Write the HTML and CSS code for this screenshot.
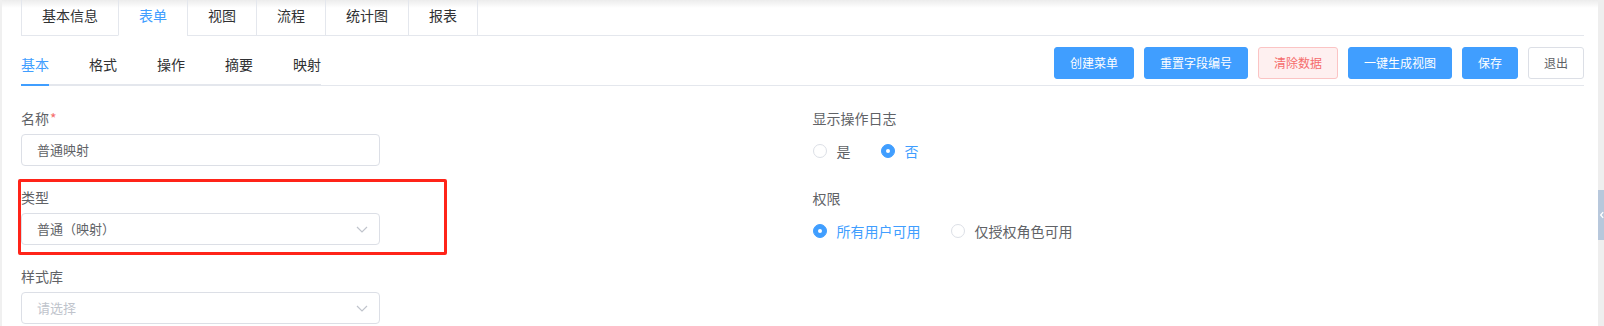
FILE: index.html
```html
<!DOCTYPE html>
<html lang="zh-CN">
<head>
<meta charset="utf-8">
<title>表单设置</title>
<link rel="stylesheet" href="styles.css">
</head>
<body>
<div class="page">
  <div class="edge-left"></div>
  <main class="main">
    <div class="card-tabs">
      <div class="card-tab">基本信息</div>
      <div class="card-tab is-active">表单</div>
      <div class="card-tab">视图</div>
      <div class="card-tab">流程</div>
      <div class="card-tab">统计图</div>
      <div class="card-tab is-last">报表</div>
      <div class="card-fill"></div>
    </div>

    <div class="toolbar">
      <nav class="subtabs">
        <div class="subtab is-active"><span>基本</span></div>
        <div class="subtab"><span>格式</span></div>
        <div class="subtab"><span>操作</span></div>
        <div class="subtab"><span>摘要</span></div>
        <div class="subtab is-last"><span>映射</span></div>
      </nav>
      <div class="actions">
        <button class="btn btn-primary" type="button">创建菜单</button>
        <button class="btn btn-primary" type="button">重置字段编号</button>
        <button class="btn btn-danger-plain" type="button">清除数据</button>
        <button class="btn btn-primary" type="button">一键生成视图</button>
        <button class="btn btn-primary" type="button">保存</button>
        <button class="btn btn-default" type="button">退出</button>
      </div>
    </div>

    <form class="form">
      <div class="col">
        <div class="item">
          <div class="label">名称<span class="req">*</span></div>
          <div class="input"><span class="value">普通映射</span></div>
        </div>
        <div class="item is-marked">
          <div class="label">类型</div>
          <div class="input select">
            <span class="value">普通（映射）</span>
            <svg class="chevron" width="12" height="7" viewBox="0 0 12 7"><path d="M1 1 L6 6 L11 1" fill="none" stroke="#c0c4cc" stroke-width="1.2"/></svg>
          </div>
          <div class="highlight"></div>
        </div>
        <div class="item">
          <div class="label">样式库</div>
          <div class="input select">
            <span class="value placeholder">请选择</span>
            <svg class="chevron" width="12" height="7" viewBox="0 0 12 7"><path d="M1 1 L6 6 L11 1" fill="none" stroke="#c0c4cc" stroke-width="1.2"/></svg>
          </div>
        </div>
      </div>
      <div class="col">
        <div class="item">
          <div class="label label-radio">显示操作日志</div>
          <div class="radio-group">
            <label class="radio"><span class="dot"></span><span class="radio-text">是</span></label>
            <label class="radio is-checked"><span class="dot"></span><span class="radio-text">否</span></label>
          </div>
        </div>
        <div class="item">
          <div class="label label-radio">权限</div>
          <div class="radio-group">
            <label class="radio is-checked"><span class="dot"></span><span class="radio-text">所有用户可用</span></label>
            <label class="radio"><span class="dot"></span><span class="radio-text">仅授权角色可用</span></label>
          </div>
        </div>
      </div>
    </form>
  </main>
  <div class="edge-right">
    <div class="collapse-handle">
      <svg width="6" height="10" viewBox="0 0 6 10"><path d="M5 1.5 L2 5 L5 8.5" fill="none" stroke="#ffffff" stroke-width="1.6"/></svg>
    </div>
  </div>
</div>
</body>
</html>
```
FILE: styles.css
```css
* { box-sizing: border-box; }

html, body {
  margin: 0;
  height: 100%;
  overflow: hidden;
  background: #fff;
}

body {
  font-family: "Noto Sans CJK SC", "Liberation Sans", sans-serif;
  font-size: 14px;
  color: #606266;
}

.page {
  display: flex;
  height: 100%;
}

.edge-left {
  width: 2px;
  flex: none;
  background: #f0f0f0;
}

.edge-right {
  width: 6px;
  flex: none;
  background: #eeeeee;
  position: relative;
}

.collapse-handle {
  position: absolute;
  top: 190px;
  right: 0;
  width: 6px;
  height: 50px;
  background: #b8c8dc;
  display: flex;
  align-items: center;
  padding-left: 1px;
}

.collapse-handle svg { display: block; }

.main {
  flex: 1;
  min-width: 0;
  padding: 0 14px 0 19px;
  background: linear-gradient(to bottom, #ececec 0, #ffffff 8px) no-repeat;
}

/* top card tabs */
.card-tabs {
  display: flex;
  margin-top: -5px;
}

.card-tab {
  height: 41px;
  line-height: 40px;
  padding: 0 20px;
  font-size: 14px;
  color: #303133;
  border-left: 1px solid #e4e7ed;
  border-bottom: 1px solid #e4e7ed;
}

.card-tab.is-active {
  color: #409eff;
  border-bottom-color: transparent;
}

.card-tab.is-last {
  border-right: 1px solid #e4e7ed;
}

.card-fill {
  flex: 1;
  border-bottom: 1px solid #e4e7ed;
}

/* toolbar with sub tabs and buttons */
.toolbar {
  display: flex;
  align-items: flex-start;
  padding-top: 8px;
  border-bottom: 1px solid #e4e7ed;
}

.subtabs {
  display: flex;
  border-bottom: 2px solid #e4e7ed;
  margin-bottom: -1px;
}

.subtab {
  height: 40px;
  padding: 0 20px;
  font-size: 14px;
  color: #303133;
}

.subtab:first-child { padding-left: 0; }
.subtab.is-last { padding-right: 0; }

.subtab span {
  display: block;
  height: 40px;
  line-height: 40px;
}

.subtab.is-active span {
  color: #409eff;
  box-shadow: 0 2px 0 #409eff;
}

.actions {
  margin-left: auto;
  margin-top: 3px;
  display: flex;
  gap: 10px;
}

.btn {
  height: 32px;
  padding: 0 15px;
  font-family: inherit;
  font-size: 12px;
  line-height: 30px;
  border-radius: 3px;
  border: 1px solid #dcdfe6;
  background: #fff;
  color: #606266;
  cursor: pointer;
  white-space: nowrap;
}

.btn-primary {
  background: #409eff;
  border-color: #409eff;
  color: #fff;
}

.btn-danger-plain {
  background: #fef0f0;
  border-color: #fbc4c4;
  color: #f56c6c;
}

/* form */
.form {
  display: grid;
  grid-template-columns: 1fr 1fr;
  column-gap: 20px;
  padding-top: 22px;
  margin: 0;
}

.item {
  margin-bottom: 21px;
}

.item.is-marked {
  position: relative;
}

.label {
  font-size: 14px;
  line-height: 20px;
  height: 20px;
  color: #606266;
  margin-bottom: 6px;
}

.label.label-radio {
  margin-bottom: 7px;
}

.req {
  color: #f56c6c;
  margin-left: 1px;
}

.input {
  width: 359px;
  height: 32px;
  border: 1px solid #dcdfe6;
  border-radius: 4px;
  padding: 0 11px 0 15px;
  display: flex;
  align-items: center;
  font-size: 13px;
  color: #606266;
}

.input .value {
  flex: 1;
  line-height: 30px;
}

.input .placeholder {
  color: #c0c4cc;
}

.chevron {
  display: block;
  flex: none;
}

.highlight {
  position: absolute;
  left: -3px;
  top: -8px;
  width: 429px;
  height: 76px;
  border: 3px solid #ff2419;
  border-radius: 2px;
  pointer-events: none;
}

.radio-group {
  height: 32px;
  display: flex;
  align-items: center;
}

.radio {
  display: flex;
  align-items: center;
  margin-right: 30px;
  font-size: 14px;
  color: #606266;
  cursor: pointer;
}

.dot {
  width: 14px;
  height: 14px;
  border-radius: 50%;
  border: 1px solid #dcdfe6;
  background: #fff;
  display: flex;
  align-items: center;
  justify-content: center;
}

.radio-text {
  padding-left: 10px;
  line-height: 20px;
}

.radio.is-checked .dot {
  background: #409eff;
  border-color: #409eff;
}

.radio.is-checked .dot::after {
  content: "";
  width: 4px;
  height: 4px;
  border-radius: 50%;
  background: #fff;
}

.radio.is-checked .radio-text {
  color: #409eff;
}
```
